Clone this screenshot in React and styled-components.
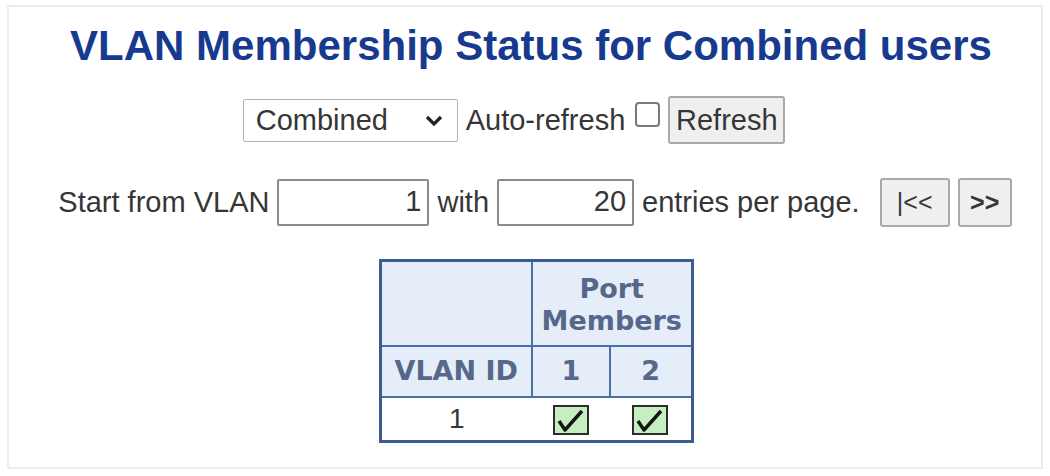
import React from "react";
import styled, { createGlobalStyle } from "styled-components";

const GlobalStyle = createGlobalStyle`
  html, body {
    margin: 0;
    padding: 0;
    background: #ffffff;
  }
  * {
    box-sizing: border-box;
  }
`;

const Frame = styled.div`
  margin: 5px 7px;
  width: 1036px;
  height: 464px;
  border: 2px solid #ececec;
  font-family: "Liberation Sans", Arial, sans-serif;
  color: #363636;
  display: flex;
  flex-direction: column;
  align-items: center;
  padding-top: 15px;
`;

const Title = styled.h1`
  margin: 0 0 0 12px;
  font-size: 42px;
  line-height: 48px;
  font-weight: 700;
  color: #183a8e;
  white-space: nowrap;
`;

const Row = styled.div`
  display: flex;
  align-items: center;
  justify-content: center;
  height: ${({ $h }) => $h}px;
  margin-top: ${({ $top }) => $top}px;
  margin-left: ${({ $shift }) => $shift}px;
  gap: ${({ $gap }) => $gap}px;
  font-size: 29px;
  white-space: nowrap;
`;

const Label = styled.span`
  color: #363636;
  margin-left: ${({ $ml }) => $ml || 0}px;
`;

const SelectWrap = styled.div`
  position: relative;
  width: 215px;
  height: 43px;
`;

const Select = styled.select`
  appearance: none;
  width: 100%;
  height: 100%;
  border: 1px solid #b4b4b4;
  border-radius: 2px;
  background: #ffffff;
  font-family: inherit;
  font-size: 29px;
  color: #363636;
  padding: 0 0 0 12px;
  outline: none;
`;

const Chevron = styled.svg`
  position: absolute;
  right: 14px;
  top: 15px;
  pointer-events: none;
`;

const Check = styled.input`
  appearance: none;
  width: 25px;
  height: 25px;
  margin: 0 0 12px 2px;
  border: 2px solid #7a7a7a;
  border-radius: 4px;
  background: #ffffff;
`;

const Button = styled.button`
  height: ${({ $h }) => $h || 48}px;
  width: ${({ $w }) => $w}px;
  padding: 0;
  border: 2px solid #a9a9a9;
  border-radius: 3px;
  background: #efefef;
  font-family: inherit;
  font-size: ${({ $fs }) => $fs || 29}px;
  font-weight: ${({ $bold }) => ($bold ? 700 : 400)};
  color: #363636;
  margin-left: ${({ $ml }) => $ml || 0}px;
`;

const Field = styled.input`
  width: ${({ $w }) => $w}px;
  height: 47px;
  border: 2px solid #8a8a8a;
  border-radius: 2px;
  font-family: inherit;
  font-size: 29px;
  color: #363636;
  text-align: right;
  padding: 0 6px 2px 0;
  outline: none;
`;

const Table = styled.table`
  margin-top: 32px;
  margin-left: 22px;
  border-collapse: collapse;
  table-layout: fixed;
  border: 3px solid #3b5d94;
  font-family: "DejaVu Sans", Verdana, sans-serif;
`;

const Head = styled.th`
  background: #e5edf8;
  color: #56678a;
  font-size: 27px;
  font-weight: 700;
  line-height: 32px;
  text-align: center;
  border: 2px solid #4a6ea6;
  height: ${({ $h }) => $h}px;
  padding: ${({ $pt }) => $pt || 0}px 0 0;
`;

const Cell = styled.td`
  height: 45px;
  text-align: center;
  padding: 0;
  font-family: "Liberation Sans", Arial, sans-serif;
  font-size: 28px;
  color: #363636;
`;

const Tick = () => (
  <svg width="36" height="30" viewBox="0 0 36 30" style={{ display: "block", margin: "2px auto 0" }}>
    <rect x="1" y="1" width="34" height="28" fill="#c6efc1" stroke="#2c2c2c" strokeWidth="2" />
    <path d="M6 16 L12 25 L29 6" fill="none" stroke="#141414" strokeWidth="3.4" strokeLinejoin="round" />
  </svg>
);

export default function App() {
  return (
    <>
      <GlobalStyle />
      <Frame>
        <Title>VLAN Membership Status for Combined users</Title>

        <Row $h={48} $top={26} $shift={-22} $gap={8}>
          <SelectWrap>
            <Select defaultValue="combined">
              <option value="combined">Combined</option>
            </Select>
            <Chevron width="20" height="14" viewBox="0 0 20 14">
              <path d="M3 3 L10 10 L17 3" fill="none" stroke="#222" strokeWidth="3.2" />
            </Chevron>
          </SelectWrap>
          <Label>Auto-refresh</Label>
          <Check type="checkbox" />
          <Button $w={117}>Refresh</Button>
        </Row>

        <Row $h={49} $top={34} $shift={20} $gap={8}>
          <Label>Start from VLAN</Label>
          <Field $w={152} defaultValue="1" />
          <Label>with</Label>
          <Field $w={137} defaultValue="20" />
          <Label>entries per page.</Label>
          <Button $w={70} $h={49} $fs={25} $ml={12}>|&lt;&lt;</Button>
          <Button $w={54} $h={49} $fs={25} $bold>&gt;&gt;</Button>
        </Row>

        <Table>
          <colgroup>
            <col style={{ width: 152 }} />
            <col style={{ width: 78 }} />
            <col style={{ width: 82 }} />
          </colgroup>
          <thead>
            <tr>
              <Head $h={85} />
              <Head $h={85} $pt={4} colSpan={2}>
                Port
                <br />
                Members
              </Head>
            </tr>
            <tr>
              <Head $h={51}>VLAN ID</Head>
              <Head $h={51}>1</Head>
              <Head $h={51}>2</Head>
            </tr>
          </thead>
          <tbody>
            <tr>
              <Cell>1</Cell>
              <Cell>
                <Tick />
              </Cell>
              <Cell>
                <Tick />
              </Cell>
            </tr>
          </tbody>
        </Table>
      </Frame>
    </>
  );
}
